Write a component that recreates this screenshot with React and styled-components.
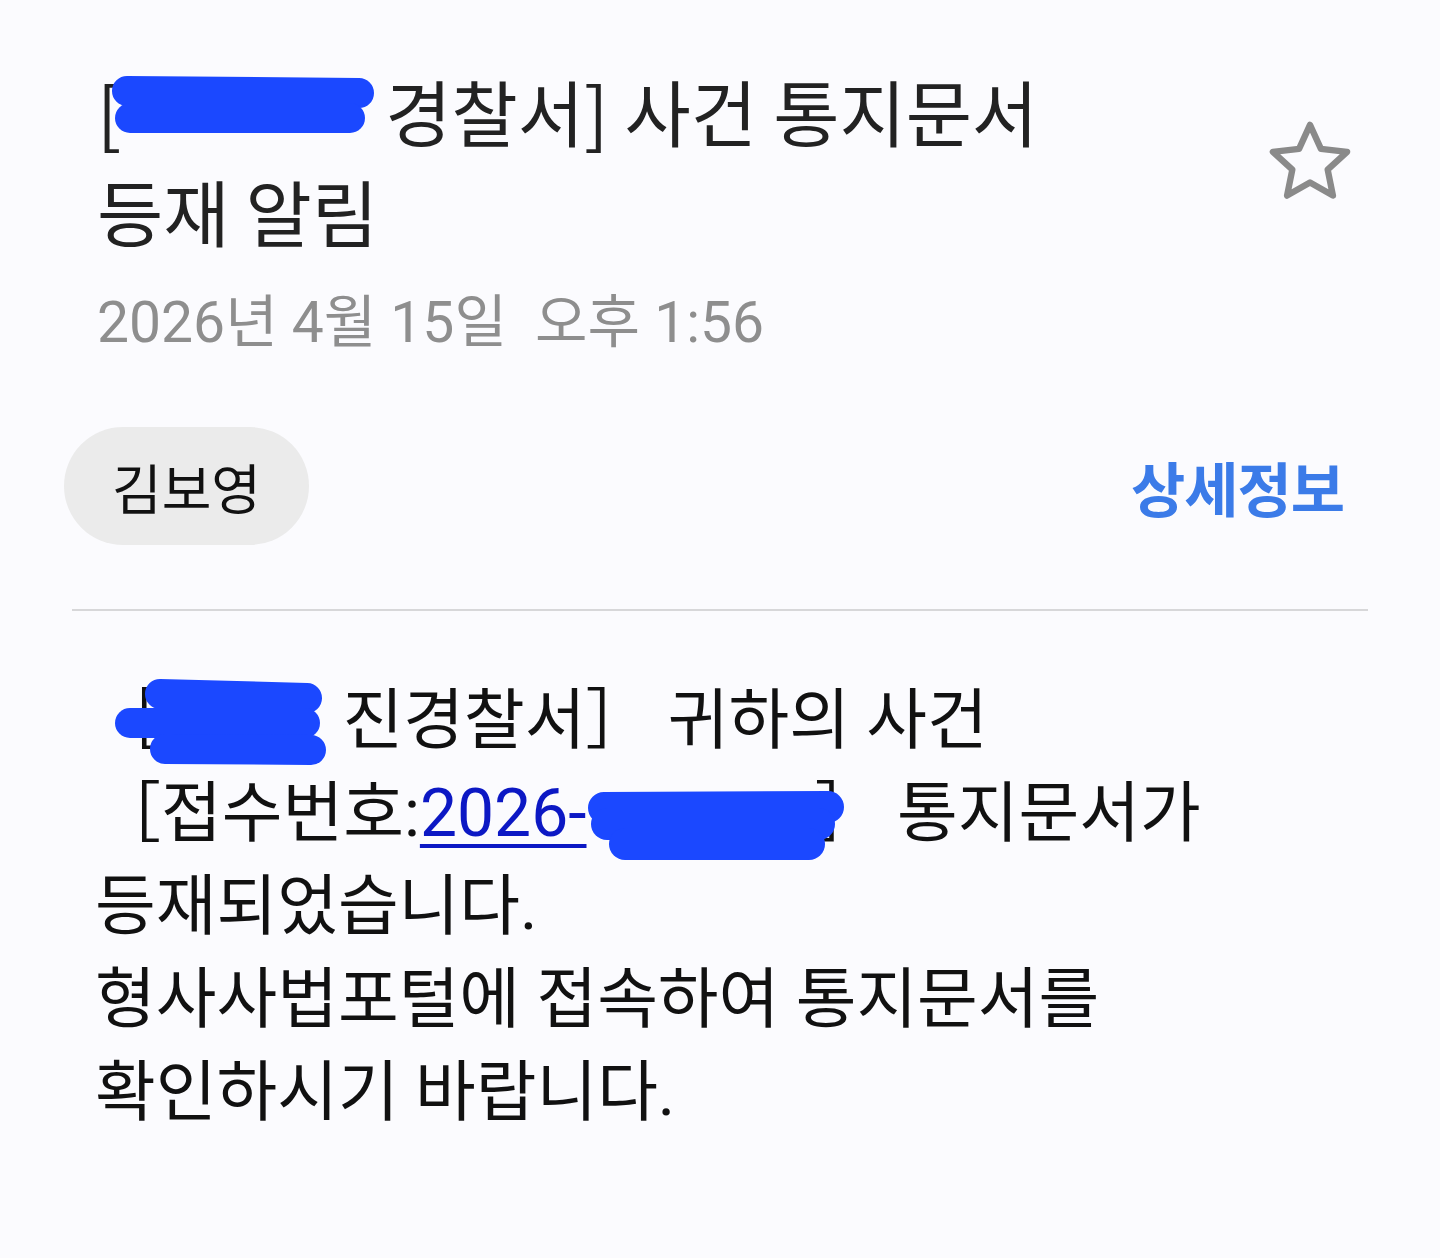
import React from "react";
import styled, { createGlobalStyle } from "styled-components";

const GlobalStyle = createGlobalStyle`
  html, body {
    margin: 0;
    padding: 0;
    background: #fbfbfe;
  }
  body {
    font-family: Roboto, "Noto Sans CJK KR", sans-serif;
    color: #1e1e1e;
  }
`;

const Page = styled.div`
  width: 1440px;
  height: 1258px;
  box-sizing: border-box;
  padding-top: 60px;
  background: #fbfbfe;
  overflow: hidden;
`;

const Header = styled.header`
  display: flex;
  justify-content: space-between;
  align-items: flex-start;
  padding: 0 89px 0 97px;
`;

const Title = styled.h1`
  margin: 0;
  font-family: "Noto Sans CJK KR", sans-serif;
  font-size: 72px;
  font-weight: 400;
  line-height: 100px;
  color: #222222;
`;

const StarButton = styled.button`
  margin-top: 60px;
  padding: 0;
  border: 0;
  background: none;
  width: 82px;
  height: 82px;
  display: block;
`;

const DateLine = styled.div`
  margin-top: 23px;
  padding-left: 97px;
  font-family: Roboto, "Noto Sans CJK KR", sans-serif;
  font-size: 57px;
  line-height: 80px;
  color: #8e8e8e;
`;

const SenderRow = styled.div`
  margin-top: 64px;
  display: flex;
  align-items: center;
  justify-content: space-between;
  padding: 0 96px 0 64px;
`;

const Chip = styled.div`
  width: 245px;
  height: 118px;
  border-radius: 59px;
  background: #ebebeb;
  display: flex;
  align-items: center;
  justify-content: center;
  font-family: "Noto Sans CJK KR", sans-serif;
  font-size: 54px;
  color: #111111;
`;

const DetailLink = styled.a`
  font-family: "Noto Sans CJK KR", sans-serif;
  font-size: 59px;
  font-weight: 700;
  color: #3b7be8;
  text-decoration: none;
  letter-spacing: -1px;
`;

const Divider = styled.hr`
  margin: 64px 72px 0 72px;
  border: 0;
  height: 2px;
  background: #d7d7d9;
`;

const Body = styled.div`
  margin-top: 63px;
  padding-left: 95px;
  font-family: Roboto, "Noto Sans CJK KR", sans-serif;
  font-size: 66px;
  line-height: 93px;
  color: #111111;
  white-space: pre;
`;

const Redact = styled.span`
  position: relative;
  display: inline-block;
  color: transparent;
  letter-spacing: ${(p) => p.$squeeze || 0}px;
`;

const Blob = styled.svg`
  position: absolute;
  left: ${(p) => p.$left}px;
  top: ${(p) => p.$top}px;
  width: ${(p) => p.$w}px;
  height: ${(p) => p.$h}px;
  overflow: visible;
`;

const ReceiptLink = styled.a`
  color: #0c18c4;
  text-decoration: underline;
  text-decoration-thickness: 4px;
  text-underline-offset: 8px;
`;

const MARKER = "#1b48ff";

const StarIcon = () => (
  <svg width="82" height="82" viewBox="0 0 84 84">
    <path
      d="M42 5 L53.2 29.6 L80 32.6 L60.1 50.9 L65.5 77.4 L42 64 L18.5 77.4 L23.9 50.9 L4 32.6 L30.8 29.6 Z"
      fill="none"
      stroke="#8a8a8a"
      strokeWidth="6.5"
      strokeLinejoin="round"
    />
  </svg>
);

const TitleBlob = () => (
  <Blob $left={-9} $top={15} $w={262} $h={60} viewBox="0 0 262 60">
    <g stroke={MARKER} strokeWidth="30" strokeLinecap="round" fill="none">
      <path d="M15 16 L247 18" />
      <path d="M18 43 L238 43" />
    </g>
  </Blob>
);

const SenderBlob = () => (
  <Blob $left={-46} $top={4} $w={210} $h={87} viewBox="0 0 210 87">
    <g stroke={MARKER} strokeWidth="30" strokeLinecap="round" fill="none">
      <path d="M45 16 L192 20" />
      <path d="M15 45 L190 45" />
      <path d="M50 71 L196 72" />
    </g>
  </Blob>
);

const NumberBlob = () => (
  <Blob $left={0} $top={23} $w={260} $h={72} viewBox="0 0 260 72">
    <g stroke={MARKER} strokeWidth="32" strokeLinecap="round" fill="none">
      <path d="M17 18 L241 17" />
      <path d="M20 34 L232 34" />
      <path d="M38 54 L222 54" />
    </g>
  </Blob>
);

export default function App() {
  return (
    <>
      <GlobalStyle />
      <Page>
        <Header>
          <Title>
            [
            <Redact $squeeze={-6}>
              ○○○○
              <TitleBlob />
            </Redact>
            경찰서] 사건 통지문서
            <br />
            등재 알림
          </Title>
          <StarButton aria-label="중요 표시">
            <StarIcon />
          </StarButton>
        </Header>

        <DateLine>2026년 4월 15일&nbsp;&nbsp;오후 1:56</DateLine>

        <SenderRow>
          <Chip>김보영</Chip>
          <DetailLink href="#">상세정보</DetailLink>
        </SenderRow>

        <Divider />

        <Body>
          ［
          <Redact $squeeze={-5.5}>
            ○○○
            <SenderBlob />
          </Redact>
          진경찰서］ 귀하의 사건
          <br />
          ［접수번호:
          <ReceiptLink href="#">
            2026-
            <Redact $squeeze={-4.5}>
              0000000
              <NumberBlob />
            </Redact>
          </ReceiptLink>
          ］ 통지문서가
          <br />
          등재되었습니다.
          <br />
          형사사법포털에 접속하여 통지문서를
          <br />
          확인하시기 바랍니다.
        </Body>
      </Page>
    </>
  );
}
